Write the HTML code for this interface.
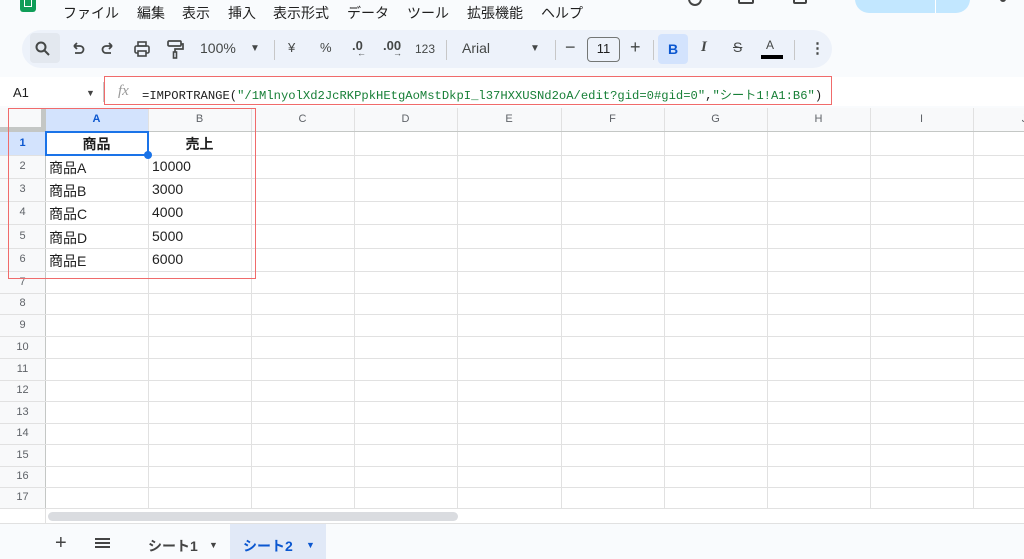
<!DOCTYPE html>
<html><head><meta charset="utf-8"><style>
*{margin:0;padding:0;box-sizing:border-box}
body{width:1024px;height:559px;overflow:hidden;background:#f9fbfd;font-family:"Liberation Sans","Noto Sans CJK JP",sans-serif;position:relative;color:#1f1f1f}
.a{position:absolute}
.menu span{position:absolute;top:3px;font-size:14px;color:#1f1f1f}
.tb{left:22px;top:30px;width:810px;height:38px;background:#edf2fa;border-radius:19px}
.ti{position:absolute;top:40px;font-size:13px;color:#444746}
.sep{position:absolute;top:40px;width:1px;height:20px;background:#c7c7c7}
.grid{left:0;top:108px;width:1024px;height:400px;background:#fff}
.h{position:absolute;font-size:11px;color:#5f6368;text-align:center}
.vl{position:absolute;width:1px;background:#e1e1e1}
.hl{position:absolute;height:1px;background:#e1e1e1;left:0;width:1024px}
.c{position:absolute;font-size:14px;color:#1f1f1f}
</style></head><body>
<div class="a" style="left:20px;top:0;width:16px;height:12px;background:#0f9d58;border-radius:0 0 3px 3px"></div>
<div class="a" style="left:24px;top:0;width:8px;height:7px;border:1.5px solid #fff;border-top:none"></div>
<div class="menu">
<span style="left:63px">ファイル</span><span style="left:137px">編集</span><span style="left:182px">表示</span><span style="left:228px">挿入</span><span style="left:273px">表示形式</span><span style="left:347px">データ</span><span style="left:407px">ツール</span><span style="left:467px">拡張機能</span><span style="left:541px">ヘルプ</span>
</div>
<div class="a" style="left:688px;top:-8px;width:14px;height:14px;border:2px solid #444;border-radius:50%"></div>
<div class="a" style="left:738px;top:-8px;width:16px;height:12px;border:2px solid #444;border-radius:2px"></div>
<div class="a" style="left:793px;top:-8px;width:14px;height:12px;border:2px solid #444;border-radius:2px"></div>
<div class="a" style="left:855px;top:-15px;width:115px;height:28px;background:#c2e7ff;border-radius:14px"></div>
<div class="a" style="left:935px;top:0;width:1px;height:13px;background:#fff"></div>
<div class="a" style="left:1000px;top:-4px;width:6px;height:6px;background:#444;border-radius:50%"></div>

<div class="a tb"></div>
<div class="a" style="left:30px;top:33px;width:30px;height:30px;background:#e3e8ef;border-radius:4px"></div>
<svg class="a" style="left:34px;top:40px" width="18" height="18" viewBox="0 0 18 18"><circle cx="7" cy="7" r="4.5" fill="none" stroke="#444746" stroke-width="2"/><path d="M10.5 10.5l4.5 4.5" stroke="#444746" stroke-width="2"/></svg>
<svg class="a" style="left:70px;top:41px" width="16" height="16" viewBox="0 0 16 16"><path d="M4 5h6a3.5 3.5 0 010 7H5M4 5l3-3M4 5l3 3" fill="none" stroke="#444746" stroke-width="1.8"/></svg>
<svg class="a" style="left:100px;top:41px" width="16" height="16" viewBox="0 0 16 16"><path d="M12 5H6a3.5 3.5 0 000 7h5M12 5L9 2M12 5L9 8" fill="none" stroke="#444746" stroke-width="1.8"/></svg>
<svg class="a" style="left:133px;top:40px" width="18" height="18" viewBox="0 0 18 18"><rect x="5" y="2" width="8" height="4" fill="none" stroke="#444746" stroke-width="1.6"/><rect x="2" y="6" width="14" height="7" rx="1.5" fill="none" stroke="#444746" stroke-width="1.6"/><rect x="5" y="11" width="8" height="5" fill="#edf2fa" stroke="#444746" stroke-width="1.6"/></svg>
<svg class="a" style="left:166px;top:39px" width="18" height="20" viewBox="0 0 18 20"><rect x="2" y="2" width="13" height="5" rx="1" fill="none" stroke="#444746" stroke-width="1.7"/><path d="M15 5h2v5H9v3" fill="none" stroke="#444746" stroke-width="1.7"/><rect x="7.5" y="13" width="3" height="6" fill="none" stroke="#444746" stroke-width="1.6"/></svg>
<span class="ti" style="left:200px;font-size:14px">100%</span>
<span class="ti" style="left:250px;font-size:10px;top:43px">▼</span>
<div class="sep" style="left:274px"></div>
<span class="ti" style="left:288px">¥</span>
<span class="ti" style="left:320px">%</span>
<span class="ti" style="left:352px;font-weight:bold;top:38px">.0<span style="font-size:9px;position:absolute;left:5px;top:10px">←</span></span>
<span class="ti" style="left:383px;font-weight:bold;top:38px">.00<span style="font-size:9px;position:absolute;left:10px;top:10px">→</span></span>
<span class="ti" style="left:415px;font-size:12px;top:42px">123</span>
<div class="sep" style="left:446px"></div>
<span class="ti" style="left:462px;font-size:14px">Arial</span>
<span class="ti" style="left:530px;font-size:10px;top:43px">▼</span>
<div class="sep" style="left:555px"></div>
<span class="ti" style="left:565px;font-size:18px;top:37px">−</span>
<div class="a" style="left:587px;top:37px;width:33px;height:25px;border:1.5px solid #747775;border-radius:4px;font-size:13px;text-align:center;line-height:22px;color:#1f1f1f">11</div>
<span class="ti" style="left:630px;font-size:18px;top:37px">+</span>
<div class="sep" style="left:653px"></div>
<div class="a" style="left:658px;top:34px;width:30px;height:30px;background:#d3e3fd;border-radius:4px;text-align:center;line-height:30px;font-weight:bold;font-size:14px;color:#0b57d0">B</div>
<span class="ti" style="left:701px;font-size:15px;font-style:italic;font-family:'Liberation Serif',serif;font-weight:bold;top:39px">I</span>
<span class="ti" style="left:733px;font-size:14px;top:39px;text-decoration:line-through">S</span>
<span class="ti" style="left:766px;font-size:12px;top:38px">A</span>
<div class="a" style="left:761px;top:55px;width:22px;height:4px;background:#000"></div>
<div class="sep" style="left:794px"></div>
<span class="ti" style="left:810px;font-size:15px;top:39px;font-weight:bold">⋮</span>

<div class="a" style="left:0;top:77px;width:1024px;height:29px;background:#fff"></div>
<span class="a" style="left:13px;top:85px;font-size:13px">A1</span>
<span class="a" style="left:86px;top:88px;font-size:9px;color:#444">▼</span>
<div class="a" style="left:103px;top:82px;width:1px;height:20px;background:#c7c7c7"></div>
<span class="a" style="left:118px;top:83px;font-size:15px;font-style:italic;font-family:'Liberation Serif',serif;color:#999">fx</span>
<span class="a" style="left:142px;top:85px;font-size:12.2px;font-family:'Liberation Mono','Noto Sans CJK JP',monospace;color:#1f1f1f;white-space:nowrap">=IMPORTRANGE(<span style="color:#188038">"/1MlnyolXd2JcRKPpkHEtgAoMstDkpI_l37HXXUSNd2oA/edit?gid=0#gid=0"</span>,<span style="color:#188038">"シート1!A1:B6"</span>)</span>
<div class="a" style="left:104px;top:76px;width:728px;height:29px;border:1.5px solid #f06b6b"></div>

<div class="a grid"></div>
<div class="a" style="left:0;top:108px;width:1024px;height:23px;background:#f8f9fa"></div>
<div class="a" style="left:0;top:131px;width:45px;height:377px;background:#f8f9fa"></div>
<div class="a" style="left:45px;top:108px;width:103px;height:23px;background:#d3e3fd"></div>
<div class="a" style="left:0;top:131px;width:45px;height:24px;background:#d3e3fd"></div>
<div class="a" style="left:0;top:108px;width:45px;height:23px;border-right:4px solid #c4c7c5;border-bottom:4px solid #c4c7c5;background:#f8f9fa"></div>
<div class="vl" style="left:45px;top:108px;height:400px;background:#c4c7c5"></div>
<div class="vl" style="left:148px;top:108px;height:400px"></div>
<div class="vl" style="left:251px;top:108px;height:400px"></div>
<div class="vl" style="left:354px;top:108px;height:400px"></div>
<div class="vl" style="left:457px;top:108px;height:400px"></div>
<div class="vl" style="left:561px;top:108px;height:400px"></div>
<div class="vl" style="left:664px;top:108px;height:400px"></div>
<div class="vl" style="left:767px;top:108px;height:400px"></div>
<div class="vl" style="left:870px;top:108px;height:400px"></div>
<div class="vl" style="left:973px;top:108px;height:400px"></div>
<div class="hl" style="top:131px;background:#c4c7c5"></div>
<div class="hl" style="top:155px"></div><div class="hl" style="top:178px"></div><div class="hl" style="top:201px"></div><div class="hl" style="top:224px"></div><div class="hl" style="top:248px"></div><div class="hl" style="top:271px"></div><div class="hl" style="top:293px"></div><div class="hl" style="top:314px"></div><div class="hl" style="top:336px"></div><div class="hl" style="top:358px"></div><div class="hl" style="top:380px"></div><div class="hl" style="top:401px"></div><div class="hl" style="top:423px"></div><div class="hl" style="top:444px"></div><div class="hl" style="top:466px"></div><div class="hl" style="top:487px"></div><div class="hl" style="top:508px"></div>
<span class="h" style="left:45px;width:103px;top:113px;font-weight:bold;color:#0b57d0">A</span>
<span class="h" style="left:148px;width:103px;top:113px">B</span><span class="h" style="left:251px;width:103px;top:113px">C</span><span class="h" style="left:354px;width:103px;top:113px">D</span><span class="h" style="left:457px;width:104px;top:113px">E</span><span class="h" style="left:561px;width:103px;top:113px">F</span><span class="h" style="left:664px;width:103px;top:113px">G</span><span class="h" style="left:767px;width:103px;top:113px">H</span><span class="h" style="left:870px;width:103px;top:113px">I</span><span class="h" style="left:973px;width:103px;top:113px">J</span>
<span class="h" style="left:0;width:45px;top:137px;font-weight:bold;color:#0b57d0">1</span>
<span class="h" style="left:0;width:45px;top:160px">2</span><span class="h" style="left:0;width:45px;top:183px">3</span><span class="h" style="left:0;width:45px;top:206px">4</span><span class="h" style="left:0;width:45px;top:230px">5</span><span class="h" style="left:0;width:45px;top:253px">6</span><span class="h" style="left:0;width:45px;top:276px">7</span><span class="h" style="left:0;width:45px;top:297px">8</span><span class="h" style="left:0;width:45px;top:319px">9</span><span class="h" style="left:0;width:45px;top:341px">10</span><span class="h" style="left:0;width:45px;top:363px">11</span><span class="h" style="left:0;width:45px;top:384px">12</span><span class="h" style="left:0;width:45px;top:406px">13</span><span class="h" style="left:0;width:45px;top:427px">14</span><span class="h" style="left:0;width:45px;top:449px">15</span><span class="h" style="left:0;width:45px;top:470px">16</span><span class="h" style="left:0;width:45px;top:491px">17</span>
<div class="a" style="left:45px;top:131px;width:104px;height:25px;border:2px solid #1a73e8"></div>
<div class="a" style="left:144px;top:151px;width:8px;height:8px;border-radius:50%;background:#1a73e8"></div>
<span class="c" style="left:45px;width:103px;text-align:center;top:134px;font-weight:bold">商品</span>
<span class="c" style="left:148px;width:103px;text-align:center;top:134px;font-weight:bold">売上</span>
<span class="c" style="left:49px;top:158px">商品A</span><span class="c" style="left:152px;top:158px">10000</span>
<span class="c" style="left:49px;top:181px">商品B</span><span class="c" style="left:152px;top:181px">3000</span>
<span class="c" style="left:49px;top:204px">商品C</span><span class="c" style="left:152px;top:204px">4000</span>
<span class="c" style="left:49px;top:228px">商品D</span><span class="c" style="left:152px;top:228px">5000</span>
<span class="c" style="left:49px;top:251px">商品E</span><span class="c" style="left:152px;top:251px">6000</span>
<div class="a" style="left:8px;top:108px;width:248px;height:171px;border:1.5px solid #f06b6b"></div>

<div class="a" style="left:0;top:509px;width:1024px;height:14px;background:#fff"></div>
<div class="a" style="left:45px;top:509px;width:1px;height:14px;background:#e1e1e1"></div>
<div class="a" style="left:48px;top:512px;width:410px;height:9px;background:#dadce0;border-radius:5px"></div>
<div class="a" style="left:0;top:523px;width:1024px;height:1px;background:#e1e1e1"></div>
<span class="a" style="left:55px;top:533px;font-size:20px;color:#444;line-height:20px">+</span>
<div class="a" style="left:95px;top:538px;width:15px;height:2px;background:#444;box-shadow:0 4px 0 #444,0 8px 0 #444"></div>
<span class="a" style="left:148px;top:536px;font-size:14px;color:#444;font-weight:bold">シート1</span>
<span class="a" style="left:209px;top:540px;font-size:9px;color:#444">▼</span>
<div class="a" style="left:230px;top:524px;width:96px;height:35px;background:#e1e9f7"></div>
<span class="a" style="left:243px;top:536px;font-size:14px;color:#0b57d0;font-weight:bold">シート2</span>
<span class="a" style="left:306px;top:540px;font-size:9px;color:#0b57d0">▼</span>
</body></html>
